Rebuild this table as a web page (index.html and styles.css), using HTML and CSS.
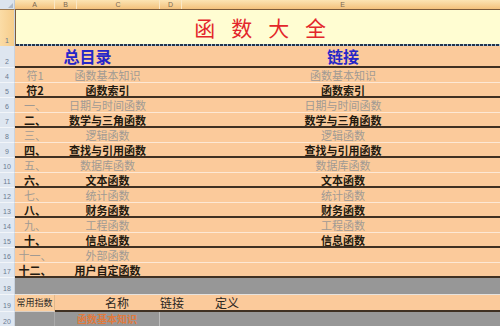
FILE: index.html
```html
<!DOCTYPE html>
<html lang="zh">
<head>
<meta charset="utf-8">
<title>函数大全</title>
<link rel="stylesheet" href="styles.css">
</head>
<body>
<div class="sheet">
  <div class="colhead">
    <div class="corner"><svg width="5" height="5" viewBox="0 0 5 5"><polygon points="5,0 5,5 0,5" fill="#aeb9c8"/></svg></div>
    <div class="ch w-a">A</div>
    <div class="ch w-b">B</div>
    <div class="ch w-c">C</div>
    <div class="ch w-d">D</div>
    <div class="ch w-e">E</div>
  </div>

  <div class="row r1">
    <div class="rn sel">1</div>
    <div class="titlecell">
      <div class="title">函 数 大 全</div>
      <div class="ants"></div>
    </div>
  </div>

  <div class="row r2">
    <div class="rn">2</div>
    <div class="cells c2 dark">
      <div class="hd">总目录</div>
      <div></div>
      <div class="hd">链接</div>
    </div>
  </div>

  <div class="row"><div class="rn">4</div><div class="cells"><div class="a g">符1</div><div class="m g">函数基本知识</div><div></div><div class="m g">函数基本知识</div></div></div>
  <div class="row"><div class="rn">5</div><div class="cells dark"><div class="a b">符2</div><div class="m b">函数索引</div><div></div><div class="m b">函数索引</div></div></div>
  <div class="row"><div class="rn">6</div><div class="cells"><div class="a g">一、</div><div class="m g">日期与时间函数</div><div></div><div class="m g">日期与时间函数</div></div></div>
  <div class="row"><div class="rn">7</div><div class="cells dark"><div class="a b">二、</div><div class="m b">数学与三角函数</div><div></div><div class="m b">数学与三角函数</div></div></div>
  <div class="row"><div class="rn">8</div><div class="cells"><div class="a g">三、</div><div class="m g">逻辑函数</div><div></div><div class="m g">逻辑函数</div></div></div>
  <div class="row"><div class="rn">9</div><div class="cells dark"><div class="a b">四、</div><div class="m b">查找与引用函数</div><div></div><div class="m b">查找与引用函数</div></div></div>
  <div class="row"><div class="rn">10</div><div class="cells"><div class="a g">五、</div><div class="m g">数据库函数</div><div></div><div class="m g">数据库函数</div></div></div>
  <div class="row"><div class="rn">11</div><div class="cells dark"><div class="a b">六、</div><div class="m b">文本函数</div><div></div><div class="m b">文本函数</div></div></div>
  <div class="row"><div class="rn">12</div><div class="cells"><div class="a g">七、</div><div class="m g">统计函数</div><div></div><div class="m g">统计函数</div></div></div>
  <div class="row"><div class="rn">13</div><div class="cells dark"><div class="a b">八、</div><div class="m b">财务函数</div><div></div><div class="m b">财务函数</div></div></div>
  <div class="row"><div class="rn">14</div><div class="cells"><div class="a g">九、</div><div class="m g">工程函数</div><div></div><div class="m g">工程函数</div></div></div>
  <div class="row"><div class="rn">15</div><div class="cells dark"><div class="a b">十、</div><div class="m b">信息函数</div><div></div><div class="m b">信息函数</div></div></div>
  <div class="row"><div class="rn">16</div><div class="cells"><div class="a g">十一、</div><div class="m g">外部函数</div><div></div><div></div></div></div>
  <div class="row"><div class="rn">17</div><div class="cells dark"><div class="a b">十二、</div><div class="m b">用户自定函数</div><div></div><div></div></div></div>

  <div class="row r18">
    <div class="rn">18</div>
    <div class="cells gray"></div>
  </div>

  <div class="row r19">
    <div class="rn">19</div>
    <div class="cells c19">
      <div class="a19">常用指数</div>
      <div class="labels">
        <span class="lbl">名称</span>
        <span class="lbl">链接</span>
        <span class="lbl">定义</span>
      </div>
    </div>
  </div>

  <div class="row r20">
    <div class="rn">20</div>
    <div class="cells c20">
      <div class="a20"></div>
      <div class="bc20">函数基本知识</div>
      <div></div>
    </div>
  </div>
</div>
</body>
</html>
```

FILE: styles.css
```css
* {
  box-sizing: border-box;
  margin: 0;
  padding: 0;
}

html,
body {
  width: 500px;
  height: 326px;
  overflow: hidden;
  background: #ffffff;
}

body {
  font-family: "Noto Sans CJK SC", "Liberation Sans", sans-serif;
}

.sheet {
  width: 504px;
  display: flex;
  flex-direction: column;
}

/* column header */
.colhead {
  display: flex;
  height: 9px;
}

.corner {
  width: 15px;
  flex: none;
  background: #dce4ee;
  border-right: 1px solid #c0cad8;
  display: flex;
  align-items: flex-end;
  justify-content: flex-end;
  padding: 0 1px 1px 0;
}

.ch {
  flex: none;
  background: linear-gradient(#fce4b4, #f3c17c);
  border-right: 1px solid #fbe8c6;
  font: 7px/9px "Liberation Sans", sans-serif;
  color: #7a6752;
  text-align: center;
}

.w-a { width: 40px; }
.w-b { width: 22px; }
.w-c { width: 83px; }
.w-d { width: 22px; }
.w-e { width: 322px; }

/* rows */
.row {
  display: flex;
  height: 15px;
}

.rn {
  width: 15px;
  flex: none;
  background: #dee6f0;
  border-bottom: 1px solid #f2f5f9;
  border-right: 1px solid #c9d3df;
  font: 7px/7px "Liberation Sans", sans-serif;
  color: #6a7a90;
  display: flex;
  align-items: flex-end;
  justify-content: center;
  padding-bottom: 2px;
}

.rn.sel {
  background: linear-gradient(90deg, #fbdca6, #f6cd8c);
  border-top: 1px solid #9c7a52;
  border-bottom: none;
}

.cells {
  width: 489px;
  flex: none;
  display: grid;
  grid-template-columns: 40px 105px 22px 322px;
  align-items: center;
  background: #fbca9b;
  border-bottom: 1px solid #fde8d4;
  font-size: 11px;
  line-height: 14px;
}

.cells.dark {
  border-bottom: 2px solid #3f3022;
}

.a,
.m {
  text-align: center;
  white-space: nowrap;
}

.g {
  color: #a19a93;
}

.b {
  color: #22190f;
  font-weight: 700;
}

/* row 1 */
.r1 {
  height: 37px;
}

.titlecell {
  width: 489px;
  flex: none;
  display: flex;
  flex-direction: column;
  background: #fffdd2;
  border-top: 1px solid #7b5b3b;
  border-left: 1px solid #7b5b3b;
}

.title {
  flex: 1;
  display: flex;
  align-items: center;
  justify-content: center;
  padding-left: 6px;
  font-size: 21px;
  letter-spacing: 5.6px;
  color: #e3262b;
  white-space: pre;
}

.ants {
  height: 2px;
  background: repeating-linear-gradient(90deg, #22344f 0 3px, #a9c5da 3px 4px);
}

/* row 2 */
.r2 {
  height: 22px;
}

.c2 {
  grid-template-columns: 145px 22px 322px;
}

.hd {
  text-align: center;
  font-size: 16px;
  line-height: 18px;
  font-weight: 700;
  color: #2626c8;
}

/* row 18 */
.r18 {
  height: 17px;
}

.cells.gray {
  background: #979797;
  border-bottom: 1px solid #e6e2de;
}

/* row 19 */
.r19 {
  height: 17px;
}

.c19 {
  grid-template-columns: 40px 449px;
  align-items: stretch;
  border-bottom: none;
  background: #979797;
}

.a19 {
  background: #fccf9f;
  border-right: 1px solid #e0b88c;
  border-bottom: 1px solid #d8d0c8;
  font-size: 9px;
  line-height: 15px;
  color: #2e2a26;
  text-align: center;
  white-space: nowrap;
}

.labels {
  display: flex;
  align-items: center;
  padding-left: 50px;
  background: #fbca9b;
  border-bottom: 2px solid #3f3022;
}

.lbl {
  width: 55px;
  font-size: 12px;
  line-height: 15px;
  color: #2a2622;
}

/* row 20 */
.r20 {
  height: 16px;
}

.c20 {
  grid-template-columns: 40px 105px 344px;
  align-items: stretch;
  background: #979797;
  border-bottom: none;
}

.a20 {
  border-right: 1px solid #aaaaaa;
}

.bc20 {
  border-right: 1px solid #bdbdbd;
  text-align: center;
  font-size: 10px;
  line-height: 14px;
  color: #e27a3c;
  font-weight: 700;
}
```
